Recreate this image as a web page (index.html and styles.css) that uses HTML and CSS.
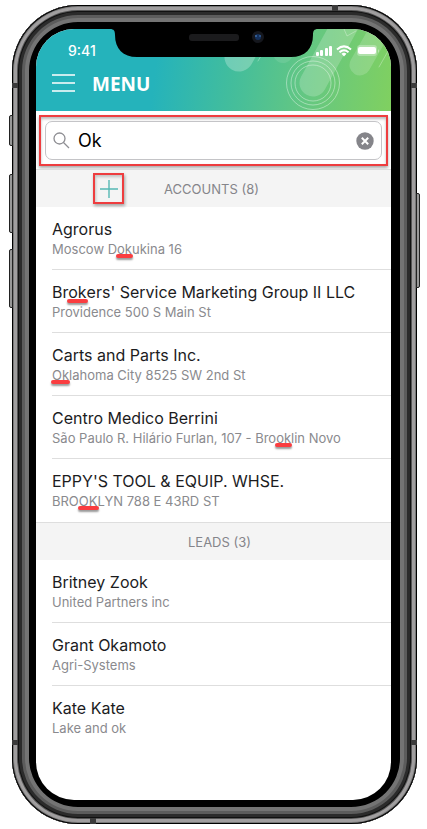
FILE: index.html
```html
<!DOCTYPE html>
<html lang="en">
<head>
<meta charset="utf-8">
<meta name="viewport" content="width=device-width, initial-scale=1">
<title>Menu search</title>
<link rel="stylesheet" href="styles.css">
</head>
<body>
<div class="phone">
  <i class="key key-mute"></i><i class="key key-up"></i><i class="key key-down"></i><i class="key key-power"></i>
  <i class="seam seam-side seam-left seam-high"></i><i class="seam seam-side seam-right seam-high"></i>
  <i class="seam seam-side seam-left seam-low"></i><i class="seam seam-side seam-right seam-low"></i>
  <i class="seam seam-edge seam-top"></i><i class="seam seam-edge seam-bottom"></i>
  <div class="screen">
    <header class="header">
      <svg class="art" width="180" height="82" viewBox="0 0 180 82" fill="none" aria-hidden="true">
        <g stroke="#fff" stroke-linecap="round">
          <path d="M102 54L135 -6" stroke-width="27" stroke-opacity=".2"/>
          <path d="M149 36L174 -8" stroke-width="21" stroke-opacity=".17"/>
          <path d="M28 28L38 10" stroke-width="29" stroke-opacity=".25"/>
          <path d="M72 24L80 10" stroke-width="20" stroke-opacity=".1"/>
          <path d="M168 38L180 17M47 32L53 22M133 0L136 7L145 2" stroke-opacity=".3"/>
        </g>
        <g stroke="#fff" stroke-opacity=".4">
          <circle cx="102" cy="54" r="26.500"/><circle cx="102" cy="54" r="22"/><circle cx="102" cy="54" r="18"/>
        </g>
      </svg>
      <svg class="notch" width="208" height="29" viewBox="0 0 208 29" aria-hidden="true">
        <path d="M0 0C4 0 5 2 5 6C5 20 13 28 27 28H181C195 28 203 20 203 6C203 2 204 0 208 0Z" fill="#000"/>
        <rect x="79" y="5" width="50" height="7" rx="3" fill="#1b1b1d"/>
        <circle cx="148" cy="8" r="6" fill="#15171d"/><circle cx="148" cy="8" r="3" fill="#14305c"/>
        <circle cx="146" cy="7" r="1" fill="#3c6da8"/><circle cx="150" cy="7" r="1" fill="#315b95"/>
      </svg>
      <div class="status">
        <span class="time">9:41</span>
        <svg class="signals" width="64" height="14" viewBox="0 0 64 14" fill="#fff" aria-hidden="true">
          <rect x="1" y="9" width="3" height="4" rx="1"/><rect x="5" y="7" width="3" height="6" rx="1"/><rect x="10" y="5" width="3" height="8" rx="1"/><rect x="14" y="3" width="3" height="10" rx="1"/>
          <g fill="none" stroke="#fff" stroke-width="2"><path d="M22 6.500Q29 .2 36 6.500"/><path d="M24.500 9.200Q29 5.200 33.500 9.200"/></g>
          <path d="M26.500 10.800Q29 8.800 31.500 10.800L29 13.500Z"/>
          <rect x="42" y="2" width="20" height="11" rx="3" fill-opacity=".3"/><rect x="43" y="4" width="18" height="7" rx="2"/><path d="M63 6Q65 8 63 10Z" fill-opacity=".4"/>
        </svg>
      </div>
      <div class="bar">
        <button class="menu" type="button" aria-label="Open menu">
          <svg width="24" height="20" viewBox="0 0 24 20" stroke="#fff" stroke-width="1.600"><path d="M0 1H23M0 9H23M0 17H23"/></svg>
        </button>
        <h1>MENU</h1>
      </div>
    </header>
    <form class="search" role="search">
      <div class="field">
        <svg width="17" height="17" viewBox="0 0 17 17" fill="none" stroke="#8e8e93" stroke-width="1.300" aria-hidden="true"><circle cx="6.500" cy="6.500" r="5.500"/><path d="M10.500 10.500L16 16"/></svg>
        <input type="text" aria-label="Search" value="Ok">
        <button type="button" aria-label="Clear search">
          <svg width="18" height="18" viewBox="0 0 18 18"><circle cx="9" cy="9" r="8.700" fill="#85858a"/><path d="M5.800 5.800L12.200 12.200M12.200 5.800L5.800 12.200" stroke="#fff" stroke-width="2"/></svg>
        </button>
      </div>
    </form>
    <main>
      <section>
        <div class="group">
          <button class="add" type="button" aria-label="Add account"><svg width="18" height="18" viewBox="0 0 18 18" stroke="#55b8b4" stroke-width="1.400"><path d="M9 0V18M0 9H18"/></svg></button>
          <h2>ACCOUNTS (8)</h2>
        </div>
        <ul>
          <li><h3>Agrorus</h3><p>Moscow D<mark>ok</mark>ukina 16</p></li>
          <li><h3>Br<mark>ok</mark>ers' Service Marketing Group II LLC</h3><p>Providence 500 S Main St</p></li>
          <li><h3>Carts and Parts Inc.</h3><p><mark>Ok</mark>lahoma City 8525 SW 2nd St</p></li>
          <li><h3>Centro Medico Berrini</h3><p>São Paulo R. Hilário Furlan, 107 - Bro<mark>ok</mark>lin Novo</p></li>
          <li><h3>EPPY'S TOOL &amp; EQUIP. WHSE.</h3><p>BRO<mark>OK</mark>LYN 788 E 43RD ST</p></li>
        </ul>
      </section>
      <section>
        <div class="group group-plain"><h2>LEADS (3)</h2></div>
        <ul>
          <li><h3>Britney Zook</h3><p>United Partners inc</p></li>
          <li><h3>Grant Okamoto</h3><p>Agri-Systems</p></li>
          <li><h3>Kate Kate</h3><p>Lake and ok</p></li>
        </ul>
      </section>
    </main>
  </div>
</div>
</body>
</html>
```
FILE: styles.css
```css
* { box-sizing: border-box; }
body {
  margin: 0;
  padding: 5px 10px 5px 12px;
  min-height: 100vh;
  display: flex;
  background: #fff;
  font-family: Inter, "Liberation Sans", sans-serif;
  color: #1c1c1e;
}
h1, h2, h3, p, ul { margin: 0; padding: 0; font-weight: 400; }
ul { list-style: none; }
button { border: 0; padding: 0; background: none; display: flex; }

.phone {
  position: relative;
  flex: 1;
  min-width: 0;
  display: flex;
  padding: 24px 26px 24px 24px;
  border-radius: 66px;
  background: #000;
  box-shadow: inset 0 0 0 1px #000, inset 0 0 0 2px #777, inset 0 0 0 5px #a09e9f,
    inset 0 0 0 6px #555, inset 0 0 0 7px #111, inset 0 0 0 10px #2b2b2b,
    inset 0 0 0 13px #5c5c5c, inset 0 0 0 17px #747474;
}
.key { position: absolute; width: 4px; background: #999; border: 1px solid #222; }
.key-mute, .key-up, .key-down { left: -3px; border-radius: 2px 0 0 2px; }
.key-mute { top: 110px; height: 31px; }
.key-up { top: 169px; height: 59px; }
.key-down { top: 244px; height: 59px; }
.key-power { right: -3px; top: 188px; height: 95px; border-radius: 0 2px 2px 0; }
.seam { position: absolute; background: #3b3b3b; }
.seam-side { width: 6px; height: 5px; }
.seam-edge { width: 6px; height: 6px; }
.seam-left { left: 0; }
.seam-right { right: 0; }
.seam-high { top: 78px; }
.seam-low { bottom: 79px; }
.seam-top { top: 0; right: 79px; }
.seam-bottom { bottom: 0; left: 78px; }

.screen { flex: 1; min-width: 0; border-radius: 38px; overflow: hidden; background: #fff; }
.header {
  position: relative;
  height: 82px;
  padding: 12px 12px 0 16px;
  background: linear-gradient(97deg, #25b3bb 34%, #42bd9d 55%, #64c782 76%, #80d060);
  color: #fff;
}
.art { position: absolute; top: 0; right: 0; }
.notch { position: absolute; top: 0; left: 50%; margin-left: -104px; }
.status { position: relative; display: flex; justify-content: space-between; align-items: center; height: 18px; padding: 0 0 0 16px; }
.time { font-size: 14px; font-weight: 500; }
.bar { position: relative; display: flex; align-items: center; gap: 16px; height: 50px; }
h1 { font: 700 19px/28px "Open Sans", sans-serif; }

.search { padding: 4px 3px; height: 58px; }
.field {
  position: relative;
  display: flex;
  align-items: center;
  gap: 8px;
  height: 51px;
  padding: 0 12px;
  border: 2px solid #ee3d3f;
  box-shadow: 0 2px 3px #0005, inset 0 2px 3px #0004;
}
.field::before {
  content: "";
  position: absolute;
  inset: 4px;
  border: 1px solid #c4c4c7;
  border-radius: 7px;
}
.field > * { position: relative; flex: none; }
.field input {
  flex: 1;
  width: 0;
  min-width: 0;
  border: 0;
  outline: 0;
  padding: 0;
  background: none;
  font: 18px/24px Inter, sans-serif;
  color: #000;
}

.group {
  position: relative;
  display: flex;
  align-items: center;
  justify-content: center;
  height: 38px;
  padding-right: 4px;
  background: #f4f4f4;
  border-top: 1px solid #dedede;
}
.group-plain { padding: 0 0 0 12px; }
.add {
  position: absolute;
  left: 57px;
  top: 3px;
  width: 31px;
  height: 31px;
  align-items: center;
  justify-content: center;
  border: 2px solid #ee3d3f;
  box-shadow: 1px 2px 3px #0005, inset 1px 2px 3px #0003;
}
h2 { font-size: 13px; line-height: 16px; color: #85858a; }
li { margin-left: 16px; height: 63px; padding-top: 12px; border-bottom: 1px solid #dedede; }
li:last-child { border-bottom: 0; }
h3 { font-size: 16px; line-height: 20px; }
p { font-size: 13px; line-height: 20px; color: #8a8a8e; }
mark { position: relative; background: none; color: inherit; }
mark::after {
  content: "";
  position: absolute;
  left: -1px;
  right: -1px;
  bottom: -1px;
  height: 4px;
  border-radius: 2px;
  background: #fa3d40;
  box-shadow: 0 2px 2px #0006;
}
```
